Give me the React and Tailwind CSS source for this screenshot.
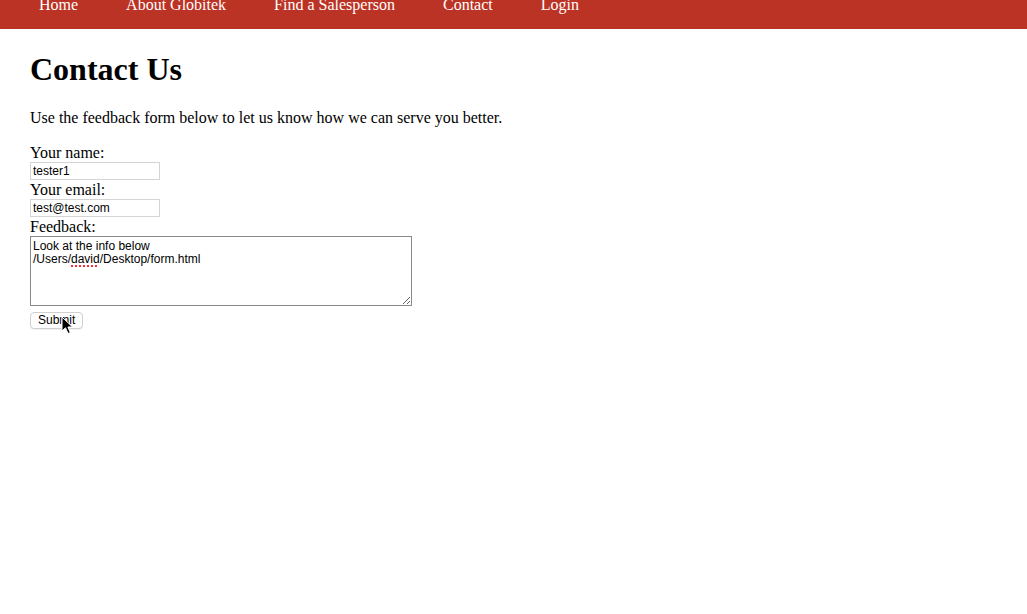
import React from 'react';

const navItems = ['Home', 'About Globitek', 'Find a Salesperson', 'Contact', 'Login'];

export default function App() {
  return (
    <div className="min-h-[614px] bg-white text-black font-['Liberation_Serif',serif]">
      {/* Top nav */}
      <nav className="h-[29px] bg-[#bb3324] overflow-hidden">
        <ul className="flex gap-12 pl-[39px] -mt-[4px]">
          {navItems.map((item) => (
            <li key={item} className="text-white text-[16px] leading-[18px]">
              {item}
            </li>
          ))}
        </ul>
      </nav>

      <main className="px-[30px]">
        <h1 className="mt-[22px] text-[32px] leading-[37px] font-bold">Contact Us</h1>
        <p className="mt-[21px] text-[16px] leading-[18px]">
          Use the feedback form below to let us know how we can serve you better.
        </p>

        <form className="mt-[16px] flex flex-col items-start text-[16px]" onSubmit={(e) => e.preventDefault()}>
          <label className="leading-[19px]">Your name:</label>
          <input
            type="text"
            defaultValue="tester1"
            className="w-[130px] h-[18px] border border-[#d4d4d4] px-[2px] text-[12px] leading-[16px] font-['Liberation_Sans',sans-serif] outline-none"
          />
          <label className="leading-[19px]">Your email:</label>
          <input
            type="text"
            defaultValue="test@test.com"
            className="w-[130px] h-[18px] border border-[#d4d4d4] px-[2px] text-[12px] leading-[16px] font-['Liberation_Sans',sans-serif] outline-none"
          />
          <label className="leading-[19px]">Feedback:</label>
          <div className="w-[382px] h-[70px] border border-[#8a8a8a] px-[2px] pt-[3px] text-[12px] leading-[13px] font-['Liberation_Sans',sans-serif] whitespace-pre-wrap resize overflow-auto">
            Look at the info below{'\n'}/Users/
            <span className="underline decoration-dotted decoration-red-500 decoration-[1.5px] underline-offset-[2px]">david</span>
            /Desktop/form.html
          </div>

          <div className="relative flex mt-[6px]">
            <button
              type="submit"
              className="h-[17px] px-[7px] border border-[#cfcfcf] rounded-[4px] bg-white text-[12px] leading-[15px] font-['Liberation_Sans',sans-serif] shadow-[0_1px_0_rgba(0,0,0,0.05)]"
            >
              Submit
            </button>
            {/* mouse pointer */}
            <svg
              className="absolute left-[31px] top-[4px] pointer-events-none"
              width="13"
              height="19"
              viewBox="0 0 13 19"
            >
              <path
                d="M1 1 L1 15 L4.5 11.8 L7 17.5 L9.3 16.5 L6.9 11 L11.5 11 Z"
                fill="#000"
                stroke="#fff"
                strokeWidth="1"
                strokeLinejoin="round"
              />
            </svg>
          </div>
        </form>
      </main>
    </div>
  );
}
